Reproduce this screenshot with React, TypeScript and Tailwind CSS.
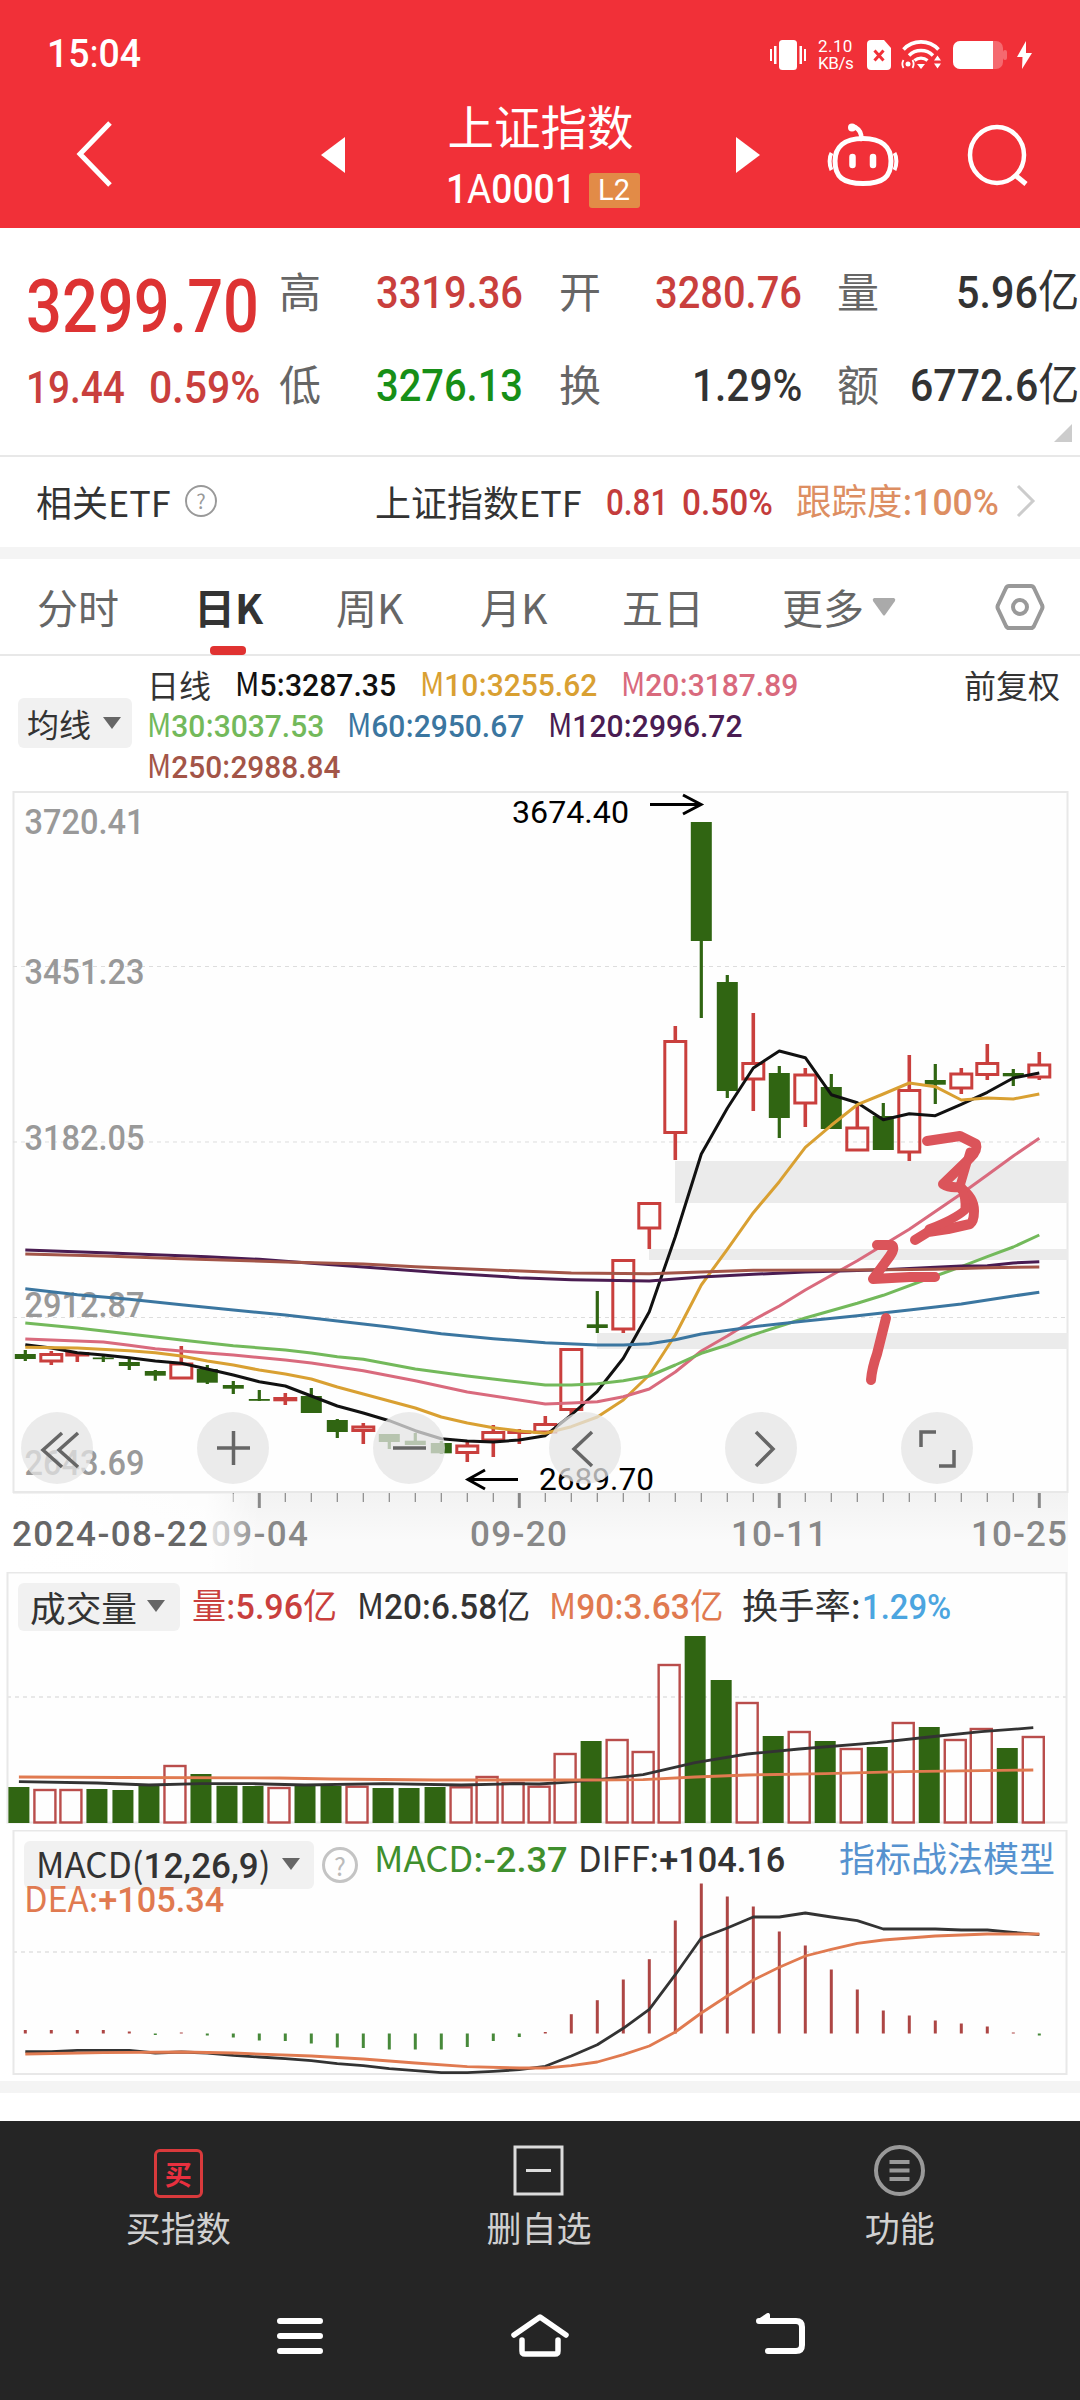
import React, {useLayoutEffect, useRef, useState} from 'react';

const RED = "#c93f3d"
const GREEN = "#306512"

type Candle = [up: boolean, top: number, bottom: number, high: number, low: number]
type Point = [index: number, y: number]

const candles: Candle[] = [
    [false, 1354, 1359, 1350, 1361],
    [true, 1354.5, 1361, 1351, 1365],
    [true, 1353.5, 1355, 1353, 1362],
    [false, 1357.5, 1359.2, 1356, 1362],
    [false, 1362, 1366, 1357, 1370],
    [false, 1371, 1375.7, 1370, 1380.7],
    [true, 1364, 1378, 1346, 1379],
    [false, 1369, 1382.7, 1365, 1384],
    [false, 1385, 1388.7, 1381, 1394],
    [false, 1399, 1400.8, 1390, 1401],
    [true, 1398.5, 1399.8, 1393, 1405],
    [false, 1396, 1413, 1388, 1413],
    [false, 1420, 1432, 1419, 1438],
    [true, 1427, 1430.5, 1423, 1444],
    [false, 1434, 1442, 1434, 1449],
    [false, 1440.7, 1445, 1433, 1445],
    [false, 1443, 1453.3, 1441, 1454],
    [true, 1446, 1452.5, 1442, 1462],
    [true, 1432.5, 1440, 1425, 1457],
    [true, 1432, 1432.5, 1429, 1444],
    [true, 1424.5, 1432, 1416, 1433],
    [true, 1349.5, 1409.5, 1349, 1415],
    [false, 1324.3, 1328, 1291, 1333],
    [true, 1260.5, 1329, 1260, 1333],
    [true, 1203.5, 1228, 1203, 1249],
    [true, 1041.5, 1132.5, 1026, 1160],
    [false, 822, 941, 822, 1018],
    [false, 982, 1091, 975, 1098],
    [true, 1063.5, 1079, 1013, 1111],
    [false, 1073, 1118, 1066, 1138],
    [true, 1075, 1103, 1068, 1127],
    [false, 1087, 1129, 1074, 1129],
    [true, 1128, 1150, 1105, 1150],
    [false, 1116, 1150, 1103, 1150],
    [true, 1090.5, 1152, 1055, 1161],
    [false, 1080, 1084.7, 1064, 1104],
    [true, 1074, 1088, 1068, 1094],
    [true, 1063.5, 1074.5, 1044, 1080],
    [false, 1073, 1076.3, 1069, 1086],
    [true, 1065, 1077, 1052, 1080],
]

const m5: Point[] = [[0, 1344.7], [1, 1348], [2, 1352.7], [3, 1355], [4, 1357.7], [5, 1361], [6, 1363.3], [7, 1369], [8, 1375], [9, 1381.7], [10, 1386], [11, 1396], [12, 1406], [13, 1413], [14, 1420.7], [15, 1430.7], [16, 1438.7], [17, 1441], [18, 1442], [19, 1440], [20, 1435.7], [21, 1415], [22, 1391.3], [23, 1358.3], [24, 1311.7], [25, 1236.7], [26, 1154], [27, 1108.3], [28, 1068], [29, 1051], [30, 1057.7], [31, 1094.7], [32, 1102.7], [33, 1119.7], [34, 1113.7], [35, 1115.7], [36, 1104.3], [37, 1092.3], [38, 1078], [39, 1073]]
const m10: Point[] = [[0, 1347.3], [2, 1348], [4, 1350.7], [5, 1352.7], [6, 1356], [7, 1361], [8, 1365], [9, 1370], [10, 1374], [11, 1379], [12, 1387], [13, 1394], [14, 1401], [15, 1408], [16, 1417], [17, 1423], [18, 1427.7], [19, 1431], [20, 1433.3], [21, 1426.7], [22, 1417], [23, 1400], [24, 1375], [25, 1335], [26, 1285], [27, 1249.3], [28, 1212.7], [29, 1181.7], [30, 1147.3], [31, 1125.3], [32, 1104.7], [33, 1094], [34, 1083], [35, 1086.7], [36, 1100], [37, 1098], [38, 1099], [39, 1094]]
const m20: Point[] = [[0, 1339], [3, 1342], [4, 1345.3], [5, 1348.7], [6, 1351], [8, 1355], [10, 1360], [11, 1363], [13, 1370.7], [15, 1380.7], [17, 1392], [19, 1400], [20, 1404], [21, 1403], [22, 1401.7], [23, 1396.7], [24, 1389], [25, 1372], [26, 1351], [27, 1336], [28, 1320], [29, 1306], [30, 1290], [32, 1260.7], [34, 1229.3], [36, 1193.7], [37, 1175], [38, 1156], [39, 1138.3]]
const m30: Point[] = [[0, 1323], [2, 1328], [4, 1334], [6, 1340], [8, 1345.7], [10, 1350], [11, 1353], [12, 1356.7], [13, 1359.3], [15, 1369], [17, 1376], [19, 1382], [20, 1385], [21, 1385], [22, 1383.7], [23, 1380.7], [24, 1376], [25, 1365], [26, 1353.3], [27, 1345], [28, 1334.7], [30, 1318], [32, 1303.3], [33, 1295.3], [35, 1276], [36, 1266.7], [37, 1256.7], [38, 1247], [39, 1235]]
const m60: Point[] = [[0, 1288.7], [2, 1294.7], [4, 1299.3], [6, 1304.7], [8, 1310], [10, 1315], [12, 1321], [14, 1327], [16, 1333.7], [18, 1338.7], [20, 1342.7], [22, 1345], [23, 1345], [24, 1343.7], [25, 1339.7], [26, 1334], [28, 1326.7], [30, 1321], [32, 1315.7], [34, 1310], [36, 1304], [38, 1296], [39, 1292.3]]
const m120: Point[] = [[0, 1250], [3, 1252.7], [7, 1256.7], [9, 1259.3], [11, 1263.3], [13, 1267], [16, 1272.7], [19, 1277.7], [21, 1279.7], [24, 1281], [26, 1277], [28, 1274.3], [30, 1272], [33, 1269.7], [36, 1266], [37, 1265.7], [38, 1263], [39, 1261.7]]
const m250: Point[] = [[0, 1254], [3, 1256], [6, 1258.7], [10, 1262], [13, 1264], [15, 1266.7], [18, 1270], [21, 1273], [24, 1273.7], [26, 1272], [28, 1270.3], [32, 1270], [35, 1269.3], [37, 1267.7], [39, 1267]]

const volumeTops = [1787, 1790, 1790, 1789, 1790, 1786, 1766, 1774, 1785.7, 1786, 1788, 1786, 1786, 1786.7, 1788, 1788, 1787, 1787.3, 1777, 1783, 1786.7, 1754, 1741, 1740, 1752, 1665, 1636, 1680, 1703, 1736, 1732, 1741, 1749, 1747, 1723, 1727, 1740, 1729, 1748, 1737]
const volumeM20: Point[] = [[0, 1781.7], [3, 1783], [5, 1785], [7, 1783.7], [9, 1783.7], [11, 1785], [14, 1783.7], [17, 1785], [19, 1783.7], [20, 1784], [21, 1782.3], [22, 1780.3], [24, 1774.7], [26, 1762.7], [28, 1754], [30, 1749], [33, 1742.7], [35, 1737], [37, 1731.7], [39, 1727.7]]
const volumeM90: Point[] = [[0, 1777], [4, 1777.5], [10, 1778], [12, 1779], [16, 1780], [22, 1780], [24, 1779.7], [26, 1777], [28, 1775], [31, 1773.7], [34, 1771.7], [37, 1770.7], [39, 1770]]

const macdBars = [3.5, 3.5, 3.5, 3.5, 2, -1.5, 1, -2, -4, -7, -7.5, -10, -14, -14.5, -16, -16, -16, -13.5, -7.5, -3.5, 1.5, 19.3, 33.3, 54, 74.3, 113, 150, 137, 127, 102, 88, 64, 44, 23, 18, 13, 10, 7, 1, -2]
const diff: Point[] = [[0, 2051.7], [1, 2051.7], [2, 2050.3], [4, 2050.3], [5, 2053], [6, 2052], [7, 2053], [8, 2055.3], [9, 2057], [10, 2058.7], [11, 2060.7], [12, 2063.7], [13, 2065.7], [14, 2068.7], [15, 2070.7], [16, 2072.7], [17, 2072.7], [18, 2071.3], [19, 2069.7], [20, 2066.3], [21, 2056], [22, 2044.7], [23, 2028.3], [24, 2009.3], [25, 1974.7], [26, 1938], [27, 1928], [28, 1917], [29, 1917], [30, 1913], [31, 1917], [32, 1920.7], [33, 1929], [35, 1929], [36, 1930], [37, 1930], [38, 1932.3], [39, 1934.7]]
const dea: Point[] = [[0, 2054], [3, 2052.7], [6, 2052], [8, 2053], [11, 2056], [13, 2059], [15, 2063], [17, 2066.7], [19, 2068], [20, 2068], [21, 2065.7], [22, 2062], [23, 2054.7], [24, 2046], [25, 2032], [26, 2013], [27, 1996], [28, 1980], [29, 1967.3], [30, 1956], [31, 1949.3], [32, 1943.3], [33, 1940], [35, 1936], [37, 1934], [39, 1934]]

const klineX = (i: number) => 25.3 + i * 26
const volumeX = (i: number) => 18.9 + i * 26.01

const toPoints = (points: Point[], x: (i: number) => number) =>
    points.map(([i, y]) => `${x(i)},${y}`).join(" ")

// digits are set in Roboto, everything else in the CJK face
const Mixed = ({text}: {text: string}) => (
    <>
        {text.split(/([\d.,%+-]+)/).map((part, i) => (
            <span key={i} className={i % 2 ? "font-['Roboto',sans-serif] font-medium" : ""}>{part}</span>
        ))}
    </>
)

type FitProps = {
    w: number
    text: string
    className?: string
}

// condenses a line of text horizontally to the given width
const Fit = ({w, text, className = ""}: FitProps) => {
    const ref = useRef<HTMLSpanElement>(null)
    const [scale, setScale] = useState<number>(1)

    useLayoutEffect(() => {
        if (ref.current) {
            setScale(w / ref.current.offsetWidth)
        }
    }, [w, text])

    return (
        <span className={`block shrink-0 whitespace-nowrap leading-none ${className}`} style={{width: w}}>
            <span ref={ref} className="inline-block origin-left" style={{transform: `scaleX(${scale})`}}>
                <Mixed text={text}/>
            </span>
        </span>
    )
}

const StatusBar = () => (
    <div className="flex h-[109px] items-center pl-[47px] pr-[48px]">
        <Fit w={94} text="15:04" className="text-[39px] font-['Roboto',sans-serif]"/>
        <div className="ml-auto flex items-center">
            <svg className="h-[30px] w-[36px]" viewBox="0 0 36 30" fill="#fff">
                <rect x="9" y="0" width="18" height="30" rx="3.5"/>
                <rect x="0" y="9" width="2" height="12"/>
                <rect x="4" y="6" width="2.5" height="18"/>
                <rect x="29.5" y="6" width="2.5" height="18"/>
                <rect x="34" y="9" width="2" height="12"/>
            </svg>
            <div className="ml-3 flex w-[38px] flex-col gap-px font-['Roboto',sans-serif] text-[17px] leading-[16px]">
                <span className="tracking-wide">2.10</span>
                <span className="tracking-tight">KB/s</span>
            </div>
            <svg className="ml-[11px] h-[30px] w-[24px]" viewBox="0 0 24 30">
                <path d="M4 0h13l7 8v18a4 4 0 0 1-4 4H4a4 4 0 0 1-4-4V4a4 4 0 0 1 4-4z" fill="#fff"/>
                <path d="M7.500 10.500l9 10M16.500 10.500l-9 10" stroke="#f13038" strokeWidth="3"/>
            </svg>
            <svg className="ml-[10px] h-[30px] w-[40px]" viewBox="0 0 40 30" fill="none" stroke="#fff">
                <path d="M2.500 9.500a24 24 0 0 1 35 0" strokeWidth="3.600"/>
                <path d="M8 15.500a17 17 0 0 1 24 0" strokeWidth="3.400"/>
                <path d="M13.500 20.500a10 10 0 0 1 13 0" strokeWidth="3.200"/>
                <path d="M16 24h8l-4 5z" fill="#fff" stroke="none"/>
                <path d="M2.500 20a8 8 0 0 0 0 8M11.500 20a8 8 0 0 1 0 8" strokeWidth="1.800"/>
                <circle cx="7" cy="24" r="2.500" fill="#fff" stroke="none"/>
                <path d="M33 20.500l3.500-5 3.500 5zM33 23.500l3.500 5 3.500-5z" fill="#fff" stroke="none"/>
            </svg>
            <svg className="ml-3 h-[28px] w-[54px]" viewBox="0 0 54 28">
                <rect x="0" y="0" width="50" height="28" rx="7" fill="#fff" opacity=".28"/>
                <rect x="50" y="9" width="4" height="10" rx="2" fill="#fff" opacity=".28"/>
                <path d="M7 0h33v28H7a7 7 0 0 1-7-7V7a7 7 0 0 1 7-7z" fill="#fff"/>
            </svg>
            <svg className="ml-2.5 h-[28px] w-[15px]" viewBox="0 0 15 28" fill="#fff">
                <path d="M9 0L0 16h5.500L5 28l10-16H9z"/>
            </svg>
        </div>
    </div>
)

const Header = () => (
    <header className="h-[228px] bg-[#f13038] text-white">
        <StatusBar/>
        <div className="flex h-[92px] items-center pl-[76px]">
            <svg className="-mt-[2px] h-[66px] w-[37px]" viewBox="0 0 37 66" fill="none" stroke="#fff" strokeWidth="5">
                <path d="M34 2L4 33l30 31"/>
            </svg>
            <svg className="ml-[208px] h-[36px] w-[24px]" viewBox="0 0 24 36" fill="#fff">
                <path d="M24 0v36L0 18z"/>
            </svg>
            <div className="flex w-[391px] flex-col items-center">
                <span className="text-[46.500px] leading-[50px]">上证指数</span>
                <div className="mt-[20px] flex items-center pl-[4px]">
                    <Fit w={130} text="1A0001" className="text-[40px] font-['Roboto',sans-serif]"/>
                    <span className="ml-[13px] flex h-[35px] w-[51px] items-center justify-center rounded-[3px] bg-[#e28b47] font-['Roboto',sans-serif] text-[29px] leading-none">L2</span>
                </div>
            </div>
            <svg className="h-[36px] w-[24px]" viewBox="0 0 24 36" fill="#fff">
                <path d="M0 0v36l24-18z"/>
            </svg>
            <svg className="ml-[67px] h-[64px] w-[72px]" viewBox="0 0 72 64" fill="none" stroke="#fff">
                <path d="M34 16c1-5-1-9-6-12" strokeWidth="4.500" strokeLinecap="round"/>
                <circle cx="25" cy="4.500" r="4" fill="#fff" stroke="none"/>
                <path d="M36 15.500c19 0 28 9 28 22.500 0 16-8 22.500-28 22.500S8 54 8 38c0-13.500 9-22.500 28-22.500z" strokeWidth="5"/>
                <path d="M4.500 30c-2.500 4-2.500 12 0 17M67.500 30c2.500 4 2.500 12 0 17" strokeWidth="4"/>
                <path d="M25.500 34v8M46 34v8" strokeWidth="6.500" strokeLinecap="round"/>
            </svg>
            <svg className="ml-[67px] h-[62px] w-[64px]" viewBox="0 0 64 62" fill="none" stroke="#fff" strokeWidth="4.500">
                <ellipse cx="31" cy="31" rx="27" ry="28"/>
                <path d="M49 51l11 9" strokeWidth="5"/>
            </svg>
        </div>
    </header>
)

const Quote = () => (
    <section className="relative flex h-[229px] border-b-2 border-[#e8e8e8] pl-[26px]">
        <div className="w-[253px]">
            <div className="flex h-[116px] items-end">
                <Fit w={233} text="3299.70" className="text-[74px] font-medium text-[#dd3333]"/>
            </div>
            <div className="mt-[19px] flex h-[44px] items-center text-[45px] text-[#c93f3d]">
                <Fit w={99} text="19.44"/>
                <Fit w={111} text="0.59%" className="ml-[24px]"/>
            </div>
        </div>
        <div className="flex flex-1 flex-col pt-[16px] text-[45px]">
            <div className="flex h-[93px] items-center">
                <span className="-mt-[2px] w-[97px] text-[42px] leading-none text-[#666]">高</span>
                <Fit w={147} text="3319.36" className="text-[#c93f3d]"/>
                <span className="-mt-[2px] ml-[36px] w-[96px] text-[42px] leading-none text-[#666]">开</span>
                <Fit w={147} text="3280.76" className="text-[#c93f3d]"/>
                <span className="-mt-[2px] ml-[35px] w-[119px] text-[42px] leading-none text-[#666]">量</span>
                <Fit w={123} text="5.96亿" className="text-[#333]"/>
            </div>
            <div className="flex h-[93px] items-center">
                <span className="-mt-[2px] w-[97px] text-[42px] leading-none text-[#666]">低</span>
                <Fit w={147} text="3276.13" className="text-[#178f17]"/>
                <span className="-mt-[2px] ml-[36px] w-[133px] text-[42px] leading-none text-[#666]">换</span>
                <Fit w={110} text="1.29%" className="text-[#333]"/>
                <span className="-mt-[2px] ml-[35px] w-[73px] text-[42px] leading-none text-[#666]">额</span>
                <Fit w={169} text="6772.6亿" className="text-[#333]"/>
            </div>
        </div>
        <svg className="absolute bottom-[13px] right-[8px] h-[18px] w-[18px]" viewBox="0 0 18 18" fill="#ccc">
            <path d="M18 0v18H0z"/>
        </svg>
    </section>
)

const RelatedEtf = () => (
    <section className="flex h-[90px] items-center pb-[2px] pl-[36px] text-[36px]">
        <Fit w={135} text="相关ETF" className="text-[#333]"/>
        <span className="ml-[14px] flex size-[32px] items-center justify-center rounded-full border-2 border-[#999] text-[20px] leading-none text-[#999]">?</span>
        <Fit w={207} text="上证指数ETF" className="ml-[158px] text-[#333]"/>
        <Fit w={62} text="0.81" className="ml-[24px] text-[#c43c3c]"/>
        <Fit w={91} text="0.50%" className="ml-[14px] text-[#c43c3c]"/>
        <Fit w={203} text="跟踪度:100%" className="ml-[23px] text-[#dd8e62]"/>
        <svg className="ml-[17px] h-[34px] w-[20px]" viewBox="0 0 20 34" fill="none" stroke="#ccc" strokeWidth="3">
            <path d="M2 2l15 15L2 32"/>
        </svg>
    </section>
)

const tabs = [
    {title: "分时", style: "ml-[37px] w-[157px]"},
    {title: "日K", style: "w-[142px] text-[#333] font-bold", active: true},
    {title: "周K", style: "w-[144px]"},
    {title: "月K", style: "w-[142px]"},
    {title: "五日", style: "w-[160px]"},
    {title: "更多", style: "w-[90px]"},
]

const Tabs = () => (
    <nav className="flex h-[97px] items-center border-b-2 border-[#e8e8e8] text-[41px] leading-none text-[#666]">
        {tabs.map((tab) => (
            <div key={tab.title} className={`relative ${tab.style}`}>
                {tab.title}
                {tab.active && <span className="absolute -bottom-[28px] left-[16px] h-[9px] w-[36px] rounded-[4px] bg-[#e03231]"/>}
            </div>
        ))}
        <svg className="h-[18px] w-[24px]" viewBox="0 0 24 18" fill="#aaa">
            <path d="M2 0h20q2 1 1 3L13 17q-1 1-2 0L1 3Q0 1 2 0z"/>
        </svg>
        <svg className="ml-[99px] h-[48px] w-[50px]" viewBox="0 0 50 48" fill="none" stroke="#999" strokeWidth="4">
            <path d="M14 3h22q2 0 3 2l8 17q1 2 0 4l-8 17q-1 2-3 2H14q-2 0-3-2L3 26q-1-2 0-4l8-17q1-2 3-2z"/>
            <circle cx="25" cy="24" r="7"/>
        </svg>
    </nav>
)

const Caret = () => (
    <svg className="h-[12px] w-[18px]" viewBox="0 0 18 12" fill="#666">
        <path d="M0 0h18l-9 12z"/>
    </svg>
)

const Legend = () => (
    <section className="flex h-[135px] pl-[18px] text-[32px] leading-none">
        <div className="mt-[42px] flex h-[50px] w-[114px] items-center rounded-md bg-[#f1f1f1] pl-[9px] text-[#333]">
            <span className="mr-[12px]">均线</span>
            <Caret/>
        </div>
        <div className="ml-[15px] mt-[7px] flex flex-1 flex-col">
            <div className="flex h-[41px] items-center">
                <span className="w-[88px] text-[#333]">日线</span>
                <Fit w={161} text="M5:3287.35" className="text-[#111]"/>
                <Fit w={177} text="M10:3255.62" className="ml-[24px] text-[#d9a032]"/>
                <Fit w={177} text="M20:3187.89" className="ml-[24px] text-[#d96a7d]"/>
                <span className="ml-auto mr-[20px] text-[#333]">前复权</span>
            </div>
            <div className="flex h-[41px] items-center">
                <Fit w={177} text="M30:3037.53" className="text-[#73b95b]"/>
                <Fit w={177} text="M60:2950.67" className="ml-[23px] text-[#3b76a0]"/>
                <Fit w={194} text="M120:2996.72" className="ml-[24px] text-[#4a1c52]"/>
            </div>
            <div className="flex h-[41px] items-center">
                <Fit w={193} text="M250:2988.84" className="text-[#a35548]"/>
            </div>
        </div>
    </section>
)

const priceLabels = [
    {text: "3720.41", y: 834},
    {text: "3451.23", y: 984},
    {text: "3182.05", y: 1150},
    {text: "2912.87", y: 1317},
    {text: "2643.69", y: 1475},
]

const dates = [
    {text: "09-04", x: 211, w: 97},
    {text: "09-20", x: 470, w: 97},
    {text: "10-11", x: 731, w: 96},
    {text: "10-25", x: 971, w: 96},
]

const controls = [
    "M41 21L22 38l19 17M57 21L38 38l19 17",
    "M20 36h33M36.500 19v34",
    "M20 36h33",
    "M43 20L25 37l18 17",
    "M31 20l17 17-17 17",
    "M35 20H20v15M38 54h15V38",
]

const KLine = () => (
    <section className="relative h-[781px]">
        <svg className="block h-[781px] w-[1080px]" viewBox="0 791 1080 781">
            <defs>
                <linearGradient id="axisDown" x1="0" y1="0" x2="0" y2="1">
                    <stop offset="0" stopColor="#f2f2f2"/>
                    <stop offset=".6" stopColor="#fafafa"/>
                    <stop offset="1" stopColor="#fafafa"/>
                </linearGradient>
                <linearGradient id="axisLeft" x1="0" y1="0" x2="1" y2="0">
                    <stop offset="0" stopColor="#fff"/>
                    <stop offset=".78" stopColor="#fff" stopOpacity=".85"/>
                    <stop offset="1" stopColor="#fff" stopOpacity="0"/>
                </linearGradient>
            </defs>
            <rect x="13" y="1493" width="1055" height="79" fill="url(#axisDown)"/>
            <rect x="13.500" y="792" width="1054" height="700" fill="#fefefe" stroke="#e8e8e8" strokeWidth="2"/>
            <g stroke="#ddd" strokeDasharray="4 4">
                <path d="M13 966.500H1067M13 1142H1067M13 1317.500H1067"/>
            </g>
            <g fill="#ebebeb">
                <rect x="675" y="1161" width="393" height="42"/>
                <rect x="649" y="1249" width="419" height="11"/>
                <rect x="597" y="1333" width="471" height="16"/>
            </g>
            <g fill="#999" fontSize="35" fontWeight="500" fontFamily="Roboto, sans-serif">
                {priceLabels.map((label) => (
                    <text key={label.text} x="24.500" y={label.y} textLength="120" lengthAdjust="spacingAndGlyphs">{label.text}</text>
                ))}
            </g>
            {candles.map(([up, top, bottom, high, low], i) => {
                const x = klineX(i)
                return up ? (
                    <g key={i} fill="none" stroke={RED} strokeWidth="3">
                        <path d={`M${x} ${high}V${top}M${x} ${bottom}V${low}`} strokeWidth="3.600"/>
                        <rect x={x - 10.5} y={top} width="21" height={bottom - top}/>
                    </g>
                ) : (
                    <g key={i} fill={GREEN}>
                        <rect x={x - 1.6} y={high} width="3.200" height={low - high}/>
                        <rect x={x - 10.5} y={top} width="21" height={bottom - top}/>
                    </g>
                )
            })}
            <g fill="none" strokeWidth="3" strokeLinejoin="round">
                <polyline points={toPoints(m5, klineX)} stroke="#111"/>
                <polyline points={toPoints(m10, klineX)} stroke="#d9a032"/>
                <polyline points={toPoints(m20, klineX)} stroke="#d96a7d"/>
                <polyline points={toPoints(m30, klineX)} stroke="#73b95b"/>
                <polyline points={toPoints(m60, klineX)} stroke="#3b76a0"/>
                <polyline points={toPoints(m120, klineX)} stroke="#4a1c52"/>
                <polyline points={toPoints(m250, klineX)} stroke="#a35548"/>
            </g>
            <g fill="none" stroke="#000" strokeWidth="3">
                <path d="M650 804.500h50M683 795l18 9.500-18 9.500"/>
                <path d="M518 1479.500h-50M485 1470l-17 9.500 17 9.500"/>
            </g>
            <g fontSize="31" fontFamily="Roboto, sans-serif">
                <text x="512" y="823" textLength="117" lengthAdjust="spacingAndGlyphs">3674.40</text>
                <text x="539" y="1490" textLength="115" lengthAdjust="spacingAndGlyphs">2689.70</text>
            </g>
            {/* pen marks */}
            <g fill="none" stroke="#db545a" strokeWidth="10" strokeLinecap="round" strokeLinejoin="round">
                <path d="M927 1141l33-5 16 8q2 6-6 14l-27 26q6 4 16 3 15 10 15 24 0 10-4 13l-22 5-20 3-13 8"/>
                <path d="M970 1152l-10 34M961 1186q5 12 4 24-10 9-36 19" strokeWidth="9"/>
                <path d="M877 1245h14q5 2-1 11l-17 23 37-2h25"/>
                <path d="M886 1318l-9 36q-5 14-6 26"/>
            </g>
            <g stroke="#888">
                {candles.map((_, i) => i >= 8 && (
                    <path key={i} d={`M${klineX(i)} 1493v${i % 10 === 9 ? 15 : 9}`} strokeWidth={i % 10 === 9 ? 3 : 1.2}/>
                ))}
            </g>
            <g fill="#888" fontSize="35" fontWeight="500" fontFamily="Roboto, sans-serif">
                {dates.map((date) => (
                    <text key={date.text} x={date.x} y="1546" textLength={date.w} lengthAdjust="spacing">{date.text}</text>
                ))}
            </g>
            <rect x="10" y="1494" width="250" height="78" fill="url(#axisLeft)"/>
            <text x="12" y="1546" fill="#666" fontSize="35" fontWeight="500" fontFamily="Roboto, sans-serif" textLength="196" lengthAdjust="spacing">2024-08-22</text>
        </svg>
        <div className="absolute left-[21px] top-[621px] flex gap-[104px]">
            {controls.map((d) => (
                <button key={d} type="button" className="size-[72px] rounded-full bg-[#e4e4e4]/75">
                    <svg className="size-[72px]" viewBox="0 0 72 72" fill="none" stroke="#666" strokeWidth="3.500">
                        <path d={d}/>
                    </svg>
                </button>
            ))}
        </div>
    </section>
)

const Volume = () => (
    <section className="relative h-[258px]">
        <svg className="absolute inset-0 h-[258px] w-[1080px]" viewBox="0 1572 1080 258">
            <rect x="7.500" y="1572.500" width="1059" height="250" fill="#fefefe" stroke="#e8e8e8" strokeWidth="2"/>
            <path d="M7 1697H1067" stroke="#e8e8e8" strokeWidth="2" strokeDasharray="4 4"/>
            {volumeTops.map((top, i) => candles[i][0] ? (
                <rect key={i} x={volumeX(i) - 10.5} y={top} width="21" height={1822.5 - top} fill="none" stroke="#b94d4b" strokeWidth="2.400"/>
            ) : (
                <rect key={i} x={volumeX(i) - 10.5} y={top} width="21" height={1823 - top} fill={GREEN}/>
            ))}
            <g fill="none" strokeWidth="2.800" strokeLinejoin="round">
                <polyline points={toPoints(volumeM20, volumeX)} stroke="#333"/>
                <polyline points={toPoints(volumeM90, volumeX)} stroke="#e07a50"/>
            </g>
        </svg>
        <div className="relative flex h-[70px] items-center pl-[18px] text-[35px] text-[#333]">
            <div className="flex h-[48px] w-[162px] items-center rounded-md bg-[#f1f1f1] pb-[2px] pl-[12px]">
                <Fit w={107} text="成交量" className="mr-[10px]"/>
                <Caret/>
            </div>
            <div className="-mt-[3px] flex">
                <Fit w={145} text="量:5.96亿" className="ml-[12px] text-[#c93f3d]"/>
                <Fit w={173} text="M20:6.58亿" className="ml-[20px]"/>
                <Fit w={174} text="M90:3.63亿" className="ml-[19px] text-[#e07a50]"/>
                <Fit w={119} text="换手率:" className="ml-[19px]"/>
                <Fit w={89} text="1.29%" className="ml-px text-[#4ba5e0]"/>
            </div>
        </div>
    </section>
)

const Macd = () => (
    <section className="relative h-[251px]">
        <svg className="absolute inset-0 h-[251px] w-[1080px]" viewBox="0 1830 1080 251">
            <rect x="13.500" y="1830.500" width="1053" height="243.500" fill="#fefefe" stroke="#e8e8e8" strokeWidth="2"/>
            <path d="M13 1952H1067" stroke="#e8e8e8" strokeWidth="2" strokeDasharray="4 4"/>
            {macdBars.map((value, i) => (
                <path key={i} d={`M${klineX(i)} 2033.500v${-value}`} stroke={value > 0 ? "#ad4644" : "#47893a"} strokeWidth="3"/>
            ))}
            <g fill="none" strokeWidth="2.800" strokeLinejoin="round">
                <polyline points={toPoints(diff, klineX)} stroke="#333"/>
                <polyline points={toPoints(dea, klineX)} stroke="#e07a50"/>
            </g>
        </svg>
        <div className="relative flex pl-[24px] pt-[11px] text-[35px] text-[#333]">
            <div className="flex h-[48px] w-[290px] items-center rounded-md bg-[#f1f1f1] pb-[2px] pl-[12px]">
                <Fit w={235} text="MACD(12,26,9)" className="mr-[11px]"/>
                <Caret/>
            </div>
            <span className="ml-[8px] mt-[6px] flex size-[36px] items-center justify-center rounded-full border-[3px] border-[#c4c4c4] text-[25px] leading-none text-[#bbb]">?</span>
            <div className="-mt-[2px] flex">
                <Fit w={194} text="MACD:-2.37" className="ml-[16px] text-[#3f8f2d]"/>
                <Fit w={207} text="DIFF:+104.16" className="ml-[10px]"/>
                <Fit w={216} text="指标战法模型" className="ml-[54px] text-[#5692cf]"/>
            </div>
        </div>
        <div className="relative -mt-[10px] pl-[24px] text-[35px] text-[#e07a50]">
            <Fit w={200} text="DEA:+105.34"/>
        </div>
    </section>
)

const BottomBar = () => (
    <footer className="h-[279px] bg-[#252525] text-[35px] leading-none text-[#d0d0d0]">
        <div className="-ml-[2px] grid grid-cols-3 pt-[24px]">
            <div className="flex flex-col items-center">
                <span className="mt-[4px] flex size-[49px] items-center justify-center rounded-[6px] border-[3px] border-[#d93a3c] text-[27px] font-bold text-[#e8303f]">买</span>
                <span className="mt-[11px]">买指数</span>
            </div>
            <div className="flex flex-col items-center">
                <svg className="h-[51px] w-[51px]" viewBox="0 0 51 51" fill="none" stroke="#dcdcdc" strokeWidth="3">
                    <path d="M2 2h47v47H2zM13 25.500h25"/>
                </svg>
                <span className="mt-[13px]">删自选</span>
            </div>
            <div className="flex flex-col items-center">
                <svg className="h-[51px] w-[51px]" viewBox="0 0 51 51" fill="none" stroke="#999" strokeWidth="4">
                    <circle cx="25.500" cy="25.500" r="23.500"/>
                    <path d="M15.500 17h20M15.500 25.500h20M15.500 34h20"/>
                </svg>
                <span className="mt-[13px]">功能</span>
            </div>
        </div>
        <div className="mt-[69px] flex items-center justify-center">
            <svg className="h-[46px] w-[48px]" viewBox="0 0 48 46" fill="none" stroke="#fff" strokeWidth="6" strokeLinecap="round">
                <path d="M4 8h40M4 23h40M4 38h40"/>
            </svg>
            <svg className="ml-[186px] h-[46px] w-[60px]" viewBox="0 0 60 46" fill="none" stroke="#fff" strokeWidth="6" strokeLinecap="round" strokeLinejoin="round">
                <path d="M4 22L30 4l26 18M12 27v11q0 3 3 3h30q3 0 3-3V27" strokeWidth="5.500"/>
            </svg>
            <svg className="ml-[185px] h-[46px] w-[50px]" viewBox="0 0 50 46" fill="none" stroke="#fff" strokeWidth="6" strokeLinecap="round" strokeLinejoin="round">
                <path d="M4 8h37q6 0 6 6v18q0 6-6 6H13"/>
                <path d="M4 8l9-6v6z" fill="#fff" strokeWidth="4"/>
            </svg>
        </div>
    </footer>
)

export default function App() {
    return (
        <div className="h-[2400px] w-[1080px] overflow-hidden bg-white font-['Noto_Sans_CJK_SC',sans-serif]">
            <Header/>
            <Quote/>
            <RelatedEtf/>
            <div className="h-[12px] bg-[#f4f4f4]"/>
            <Tabs/>
            <Legend/>
            <KLine/>
            <Volume/>
            <Macd/>
            <div className="mb-[28px] h-[12px] bg-[#f4f4f4]"/>
            <BottomBar/>
        </div>
    )
}
